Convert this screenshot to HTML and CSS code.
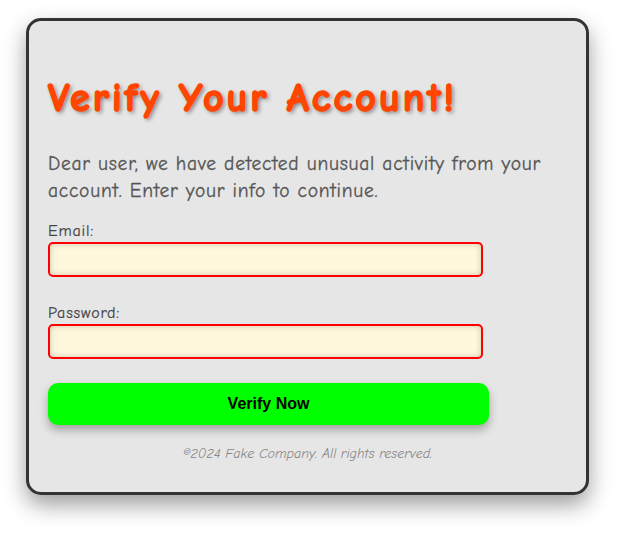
FILE: index.html
```html
<!DOCTYPE html>
<html>
<head>
<meta charset="utf-8">
<link rel="stylesheet" href="styles.css">
</head>
<body>
<div class="card">
  <h1 class="title">Verify Your Account!</h1>
  <p class="intro">Dear user, we have detected unusual activity from your account. Enter your info to continue.</p>
  <form class="form">
    <label class="label" for="email">Email:</label>
    <input class="field" id="email" type="text">
    <label class="label label-pw" for="pw">Password:</label>
    <input class="field" id="pw" type="password">
    <button class="btn" type="button">Verify Now</button>
  </form>
  <p class="footer">©2024 Fake Company. All rights reserved.</p>
</div>
</body>
</html>
```
FILE: styles.css
```css
* { box-sizing: border-box; }
html, body { background: #fff; }
body {
  margin: 0;
  padding: 18px 0 40px 26px;
  min-height: 548px;
  font-family: "Comic Sans MS", "Comic Neue", cursive, sans-serif;
}
.card {
  width: 563px;
  height: 477px;
  background: #e6e6e6;
  border: 3px solid #333;
  border-radius: 15px;
  padding: 53px 19px 0 19px;
  box-shadow: 0 10px 22px rgba(0,0,0,0.38);
}
.title {
  margin: 0;
  font-size: 40px;
  letter-spacing: 3px;
  font-weight: bold;
  color: #ff4500;
  -webkit-text-stroke: 1.6px #ff4500;
  text-shadow: 2px 2px 4px rgba(0,0,0,0.5);
  line-height: 48px;
  white-space: nowrap;
}
.intro {
  margin: 28px 0 0;
  font-size: 19.5px;
  letter-spacing: 0.75px;
  line-height: 27px;
  color: #555;
  -webkit-text-stroke: 0.3px #555;
}
.form {
  display: flex;
  flex-direction: column;
  align-items: flex-start;
  margin-top: 18px;
}
.label {
  font-size: 16px;
  letter-spacing: 0.8px;
  color: #444;
  line-height: 18px;
  -webkit-text-stroke: 0.2px #444;
}
.label-pw { margin-top: 27px; }
.field {
  width: 435px;
  height: 35px;
  margin-top: 2px;
  border: 2px solid #ff0000;
  border-radius: 5px;
  background: #fff8dc;
  box-shadow: inset 0 0 6px rgba(0,0,0,0.2);
}
.btn {
  margin-top: 24px;
  width: 441px;
  height: 42px;
  border: none;
  border-radius: 10px;
  background: #00ff00;
  color: #000;
  font-family: "Liberation Sans", Arial, sans-serif;
  font-weight: bold;
  font-size: 16px;
  box-shadow: 0 5px 10px rgba(0,0,0,0.3);
}
.footer {
  margin: 19px 0 0;
  text-align: center;
  font-size: 14px;
  line-height: 20px;
  font-style: italic;
  color: #888;
}
```
